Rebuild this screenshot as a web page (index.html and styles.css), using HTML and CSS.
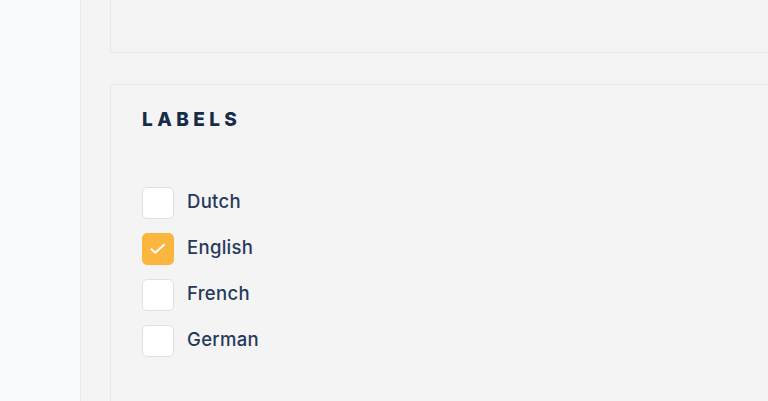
FILE: index.html
```html
<!DOCTYPE html>
<html lang="en">
<head>
<meta charset="utf-8">
<link rel="stylesheet" href="styles.css">
</head>
<body>
<aside class="sidebar"></aside>
<main class="main">
  <section class="card card-top"></section>
  <section class="card card-labels">
    <h2 class="heading">LABELS</h2>
    <ul class="options">
      <li class="option"><span class="box"></span><span class="label">Dutch</span></li>
      <li class="option"><span class="box checked"><svg width="18" height="18" viewBox="0 0 18 18"><path d="M2.5 9.2l3.8 3.6L15 4.8" fill="none" stroke="#fff" stroke-width="2" stroke-linecap="round" stroke-linejoin="round"/></svg></span><span class="label">English</span></li>
      <li class="option"><span class="box"></span><span class="label">French</span></li>
      <li class="option"><span class="box"></span><span class="label">German</span></li>
    </ul>
  </section>
</main>
</body>
</html>
```
FILE: styles.css
```css
html, body {
  margin: 0;
  height: 100%;
}
body {
  display: flex;
  font-family: Inter, "Noto Sans", sans-serif;
  background: #f4f4f4;
  overflow: hidden;
}
.sidebar {
  width: 80px;
  flex: none;
  background: #f9fafc;
  border-right: 1.5px solid #ebebeb;
}
.main {
  flex: 1;
  padding-left: 29px;
  background: #f4f4f4;
}
.card {
  background: #f4f4f4;
  border: 1.5px solid #e7e7e7;
  border-right: none;
}
.card-top {
  height: 52px;
  border-top: none;
}
.card-labels {
  margin-top: 31px;
  padding: 24px 31px 0;
  border-bottom: none;
  height: 320px;
}
.heading {
  margin: 0;
  font-size: 19px;
  line-height: 22px;
  font-weight: 800;
  letter-spacing: 4.4px;
  color: #172b4a;
}
.options {
  list-style: none;
  margin: 56px 0 0;
  padding: 0;
  display: flex;
  flex-direction: column;
  gap: 14px;
}
.option {
  display: flex;
  align-items: center;
  gap: 13px;
}
.box {
  width: 30px;
  height: 30px;
  box-sizing: content-box;
  border: 1.5px solid #dbe1ec;
  border-radius: 5px;
  background: #fff;
  display: flex;
  align-items: center;
  justify-content: center;
}
.box.checked {
  background: #fab63f;
  border-color: #fab63f;
}
.label {
  font-size: 18.5px;
  letter-spacing: 0.3px;
  font-weight: 500;
  color: #26395a;
  padding-bottom: 4px;
}
```
